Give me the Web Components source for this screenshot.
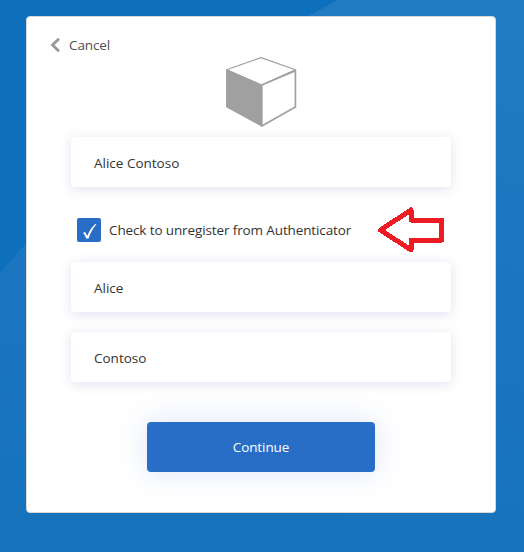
<!DOCTYPE html>
<html lang="en">
<head>
<meta charset="utf-8">
<title>Edit profile</title>
<style>
html,body{margin:0;height:100%;overflow:hidden}
body{font:13.5px/20px "Open Sans","Noto Sans",sans-serif;color:#333}
</style>
</head>
<body>
<profile-page>
  <profile-card>
    <cancel-link slot="top">Cancel</cancel-link>
    <cube-logo slot="logo"></cube-logo>
    <text-field>Alice Contoso</text-field>
    <check-row>Check to unregister from Authenticator<pointer-arrow slot="mark"></pointer-arrow></check-row>
    <text-field>Alice</text-field>
    <text-field style="margin-top:20px">Contoso</text-field>
    <submit-button slot="action">Continue</submit-button>
  </profile-card>
</profile-page>
<script>
function element(name, markup) {
  customElements.define(name, class extends HTMLElement {
    constructor() {
      super();
      this.attachShadow({mode: 'open'}).innerHTML = markup;
    }
  });
}

element('profile-page', `
<style>
:host{display:block;box-sizing:border-box;width:524px;height:552px;padding:16px 28px 39px 26px;
background:radial-gradient(circle at 854px 984px,transparent 1110.5px,#0e6fbc 1111.5px),linear-gradient(185deg,#237cc3 0%,#1c77c0 40%,#1772bc 100%)}
</style><slot></slot>`);

element('profile-card', `
<style>
:host{display:flex;flex-direction:column;box-sizing:border-box;height:497px;background:#fff;border:1px solid #d8d8d8;border-radius:4px;padding:18px 44px 0}
.logo{display:flex;justify-content:center;height:83px;margin-top:-1px}
.action{display:flex;justify-content:center;margin-top:40px}
</style>
<slot name="top"></slot>
<div class="logo"><slot name="logo"></slot></div>
<slot></slot>
<div class="action"><slot name="action"></slot></div>`);

element('cancel-link', `
<style>
:host{display:flex;align-items:center;gap:8px;height:20px;margin-left:-21px;color:#505050;cursor:pointer}
svg{display:block}
span{letter-spacing:-.1px}
</style>
<svg width="11" height="16" viewBox="0 0 11 16"><path d="M9 1.7 2.5 8 9 14.3" fill="none" stroke="#999" stroke-width="2.8"/></svg>
<span><slot></slot></span>`);

element('cube-logo', `
<style>:host{display:block;width:72px;height:72px;margin-top:2px}svg{display:block}</style>
<svg width="72" height="72" viewBox="225 56 72 72" stroke="#a0a0a0" stroke-linejoin="round">
<path d="M226.6 69.7 261 57.6 295.5 69.7 261.5 85Z" fill="#fff" stroke-width="1.2"/>
<path d="M226.6 69.7 261.5 85V126L226.6 107Z" fill="#a0a0a0" stroke-width="1"/>
<path d="M261.8 85 295.4 70.6V107L261.8 126Z" fill="#fff" stroke-width="1.7"/>
</svg>`);

element('text-field', `
<style>
:host{display:flex;align-items:center;box-sizing:border-box;height:50px;padding:2px 23px 0;background:#fff;border-radius:4px;box-shadow:0 2px 12px rgba(70,70,170,.17)}
</style><slot></slot>`);

element('check-row', `
<style>
:host{display:flex;align-items:center;box-sizing:border-box;height:75px;padding:11px 6px 0 6px}
.box{width:24px;height:24px;margin-right:8px;border-radius:2px;background:#286ec7}
.box svg{display:block}
.mark{margin-left:auto}
span{white-space:nowrap;letter-spacing:-.12px}
</style>
<div class="box"><svg width="24" height="24" viewBox="0 0 24 24"><path d="M6.2 14.7 8.1 13.9 10.2 17.9C12.2 13.1 14.8 9.2 18.3 6H19.5C15.7 10.5 13.4 15.1 11.6 20.4H9.2C8.4 18.4 7.5 16.5 6.2 14.7Z" fill="#fff"/></svg></div>
<span><slot></slot></span>
<div class="mark"><slot name="mark"></slot></div>`);

element('pointer-arrow', `
<style>:host{display:block;width:68px;height:48px}svg{display:block}</style>
<svg width="68" height="48" viewBox="377 207 68 48" shape-rendering="crispEdges"><path d="M380.5 231 411 211V221H441.5V241H411V251Z" fill="none" stroke="#ed1c24" stroke-width="5" stroke-linejoin="round"/></svg>`);

element('submit-button', `
<style>
:host{display:flex;align-items:center;justify-content:center;width:228px;height:50px;background:#286ec7;color:#fff;letter-spacing:-.1px;border-radius:4px;box-shadow:0 0 30px rgba(40,90,210,.16);cursor:pointer}
</style><slot></slot>`);
</script>
</body>
</html>
